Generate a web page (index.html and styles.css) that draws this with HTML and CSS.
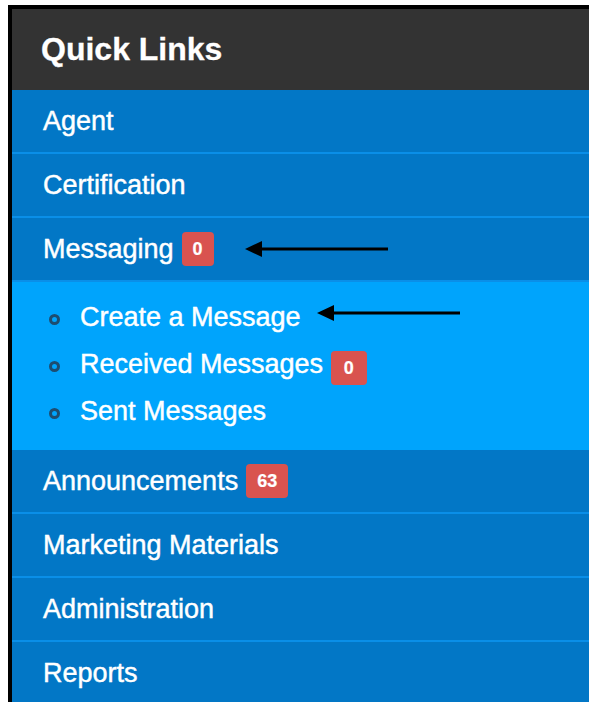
FILE: index.html
```html
<!DOCTYPE html>
<html lang="en">
<head>
<meta charset="utf-8">
<title>Quick Links</title>
<link rel="stylesheet" href="styles.css">
</head>
<body>
<div class="page">
  <nav class="panel">
    <div class="panel-heading">Quick Links</div>
    <ul class="links">
      <li class="link"><a href="#">Agent</a></li>
      <li class="link"><a href="#">Certification</a></li>
      <li class="link link-open">
        <a href="#">Messaging <span class="badge">0</span></a>
        <ul class="sub">
          <li><a href="#">Create a Message</a></li>
          <li><a href="#">Received Messages <span class="badge badge-wide">0</span></a></li>
          <li><a href="#">Sent Messages</a></li>
        </ul>
      </li>
      <li class="link"><a href="#">Announcements <span class="badge">63</span></a></li>
      <li class="link"><a href="#">Marketing Materials</a></li>
      <li class="link"><a href="#">Administration</a></li>
      <li class="link"><a href="#">Reports</a></li>
    </ul>
  </nav>
</div>

<!-- pointer arrows drawn over the menu -->
<svg class="pointers" width="589" height="702" viewBox="0 0 589 702" aria-hidden="true">
  <g fill="#000" stroke="#000">
    <line x1="258" y1="249" x2="388" y2="249" stroke-width="3.2"/>
    <polygon points="245,249 262,241 262,257" stroke="none"/>
    <line x1="330" y1="313" x2="460" y2="313" stroke-width="3.2"/>
    <polygon points="317,313 334,305 334,321" stroke="none"/>
  </g>
</svg>
</body>
</html>
```

FILE: styles.css
```css
html, body {
  margin: 0;
  padding: 0;
  background: #fff;
  overflow: hidden;
  height: 100%;
}

body {
  font-family: "Liberation Sans", Arial, sans-serif;
  color: #fff;
}

.page {
  padding: 5px 0 0 8px;
}

.panel {
  border-top: 4px solid #000;
  border-left: 4px solid #000;
  background: #0277c6;
}

.panel-heading {
  height: 81px;
  display: flex;
  align-items: center;
  padding-left: 29px;
  background: #333;
  font-size: 32px;
  font-weight: bold;
  -webkit-text-stroke: 0.3px #fff;
}

.links,
.sub {
  list-style: none;
  margin: 0;
  padding: 0;
}

.link {
  border-bottom: 2px solid #0a8fe8;
}

.link > a {
  height: 62px;
  display: flex;
  align-items: center;
  gap: 8px;
  padding-left: 31px;
  font-size: 27px;
  color: #fff;
  text-decoration: none;
  -webkit-text-stroke: 0.45px #fff;
}

.link-open {
  border-bottom: none;
}

.link-open > a {
  border-bottom: 2px solid #0a8fe8;
}

.sub {
  background: #00a4fc;
  padding: 12px 0 15px 37px;
}

.sub li {
  line-height: 47px;
  font-size: 27px;
  white-space: nowrap;
}

.sub li::before {
  content: "";
  display: inline-block;
  width: 5px;
  height: 5px;
  border: 3px solid #1d4d70;
  border-radius: 50%;
  margin-right: 20px;
  vertical-align: 1px;
}

.sub a {
  color: #fff;
  text-decoration: none;
  -webkit-text-stroke: 0.45px #fff;
}

.sub .badge {
  vertical-align: -1px;
}

.badge {
  display: inline-block;
  height: 34px;
  line-height: 34px;
  padding: 0 11px;
  border-radius: 4px;
  background: #d9534f;
  color: #fff;
  font-size: 18px;
  font-weight: bold;
  -webkit-text-stroke: 0.2px #fff;
}

.badge-wide {
  padding: 0 13px;
}

.pointers {
  position: absolute;
  left: 0;
  top: 0;
  pointer-events: none;
}
```
